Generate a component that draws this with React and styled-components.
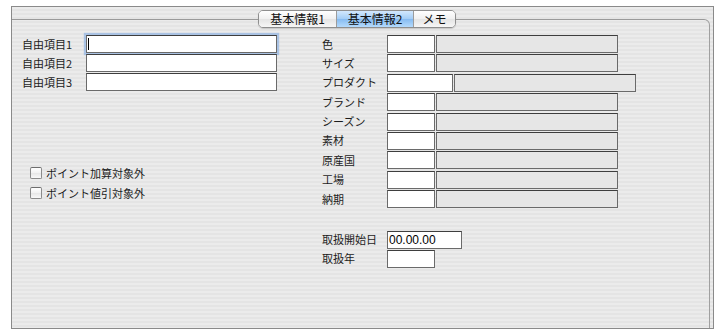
import styled, { createGlobalStyle } from 'styled-components';

const GlobalStyle = createGlobalStyle`
  body {
    margin: 0;
    background: #ffffff;
    font-family: "Noto Sans CJK JP", "Noto Sans", sans-serif;
  }
`;

const Page = styled.div`
  width: 719px;
  height: 333px;
  padding: 6px 0 0 11px;
  box-sizing: border-box;
`;

const Frame = styled.div`
  width: 703px;
  height: 323px;
  box-sizing: border-box;
  border: 1px solid #8a8a8a;
  background: repeating-linear-gradient(
    to bottom,
    #ebebeb 0 2px,
    #e4e4e4 2px 4px
  );
  display: flex;
  flex-direction: column;
`;

const TabStrip = styled.div`
  padding: 3px 0 0 246px;
  position: relative;
  z-index: 1;
  display: flex;
`;

const Segmented = styled.div`
  display: flex;
  height: 18px;
  box-sizing: border-box;
  border: 1px solid #8e8e8e;
  border-radius: 5px;
  overflow: hidden;
  box-shadow: 0 1px 1px rgba(0, 0, 0, 0.15);
`;

const Segment = styled.div`
  width: ${(p) => p.$w}px;
  display: flex;
  align-items: center;
  justify-content: center;
  font-size: 12px;
  line-height: 1;
  color: #111;
  box-sizing: border-box;
  border-left: ${(p) => (p.$first ? 'none' : '1px solid #9c9c9c')};
  background: ${(p) =>
    p.$active
      ? 'linear-gradient(#d3e8fd, #a3cdf6 50%, #86bbf1 51%, #b4dafc)'
      : 'linear-gradient(#ffffff, #f0f0f0 50%, #e4e4e4 51%, #f6f6f6)'};
`;

const GroupBox = styled.div`
  margin-top: -9px;
  width: 698px;
  flex: 1;
  box-sizing: border-box;
  border-top: 1px solid #9a9a9a;
  border-right: 1px solid #a0a0a0;
  border-top-right-radius: 6px;
  padding-top: 15px;
  display: flex;
`;

const LeftCol = styled.div`
  width: 310px;
  padding-left: 10px;
  box-sizing: border-box;
  display: flex;
  flex-direction: column;
  gap: 1px;
`;

const RightCol = styled.div`
  display: flex;
  flex-direction: column;
  gap: 1.4px;
`;

const Row = styled.div`
  display: flex;
  align-items: center;
  height: 18px;
  margin-top: ${(p) => p.$mt || 0}px;
`;

const Label = styled.div`
  width: ${(p) => p.$w}px;
  flex-shrink: 0;
  font-size: 11px;
  line-height: 1;
  color: #1c1c1c;
`;

const Field = styled.div`
  position: relative;
  width: ${(p) => p.$w}px;
  height: 18px;
  box-sizing: border-box;
  border: 1px solid #6a6a6a;
  border-top-color: #3e3e3e;
  background: ${(p) => (p.$ro ? '#e6e6e6' : '#ffffff')};
  margin-left: ${(p) => p.$ml || 0}px;
  box-shadow: ${(p) =>
    p.$focus ? '0 0 1px 2px rgba(120, 165, 225, 0.55)' : 'none'};
  font-family: "Liberation Sans", Arial, sans-serif;
  font-size: 12px;
  line-height: 16px;
  padding-left: 1px;
  color: #000;
`;

const Caret = styled.span`
  position: absolute;
  left: 1px;
  top: 2px;
  width: 1px;
  height: 12px;
  background: #000;
`;

const Checks = styled.div`
  margin: 75px 0 0 8px;
  display: flex;
  flex-direction: column;
  gap: 8px;
`;

const CheckRow = styled.label`
  display: flex;
  align-items: center;
  height: 12px;
  gap: 4px;
  font-size: 11px;
  line-height: 1;
  color: #1c1c1c;
`;

const Box = styled.span`
  width: 12px;
  height: 12px;
  box-sizing: border-box;
  border: 1px solid #8a8a8a;
  border-top-color: #6e6e6e;
  border-radius: 2px;
  background: linear-gradient(#ffffff, #f1f1f1 50%, #e6e6e6 51%, #f8f8f8);
`;

const lookups = [
  ['色', 48],
  ['サイズ', 48],
  ['プロダクト', 66],
  ['ブランド', 48],
  ['シーズン', 48],
  ['素材', 48],
  ['原産国', 48],
  ['工場', 48],
  ['納期', 48],
];

export default function App() {
  return (
    <Page>
      <GlobalStyle />
      <Frame>
        <TabStrip>
          <Segmented>
            <Segment $w={77} $first>基本情報1</Segment>
            <Segment $w={77} $active>基本情報2</Segment>
            <Segment $w={42}>メモ</Segment>
          </Segmented>
        </TabStrip>
        <GroupBox>
          <LeftCol>
            {['自由項目1', '自由項目2', '自由項目3'].map((t, i) => (
              <Row key={t}>
                <Label $w={64}>{t}</Label>
                <Field $w={191} $focus={i === 0}>
                  {i === 0 && <Caret />}
                </Field>
              </Row>
            ))}
            <Checks>
              <CheckRow>
                <Box />
                ポイント加算対象外
              </CheckRow>
              <CheckRow>
                <Box />
                ポイント値引対象外
              </CheckRow>
            </Checks>
          </LeftCol>
          <RightCol>
            {lookups.map(([t, w]) => (
              <Row key={t}>
                <Label $w={65}>{t}</Label>
                <Field $w={w} />
                <Field $w={182} $ro $ml={1} />
              </Row>
            ))}
            <Row $mt={21}>
              <Label $w={65}>取扱開始日</Label>
              <Field $w={75}>00.00.00</Field>
            </Row>
            <Row>
              <Label $w={65}>取扱年</Label>
              <Field $w={48} />
            </Row>
          </RightCol>
        </GroupBox>
      </Frame>
    </Page>
  );
}
